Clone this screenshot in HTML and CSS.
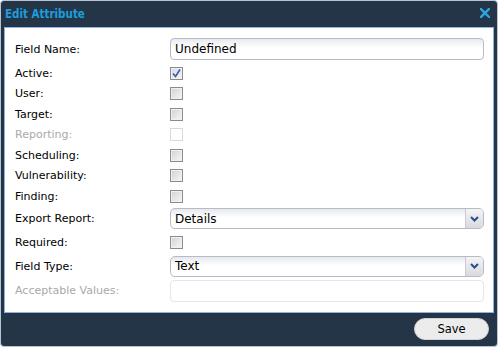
FILE: index.html
```html
<!DOCTYPE html>
<html lang="en">

<head>
    <meta charset="UTF-8">
    <title>Edit Attribute</title>
    <link rel="stylesheet" href="styles.css">
</head>

<body>

    <div class="dialog">
        <div class="titlebar">
            <span class="title">Edit Attribute</span>
            <svg class="close" width="10" height="10" viewBox="0 0 10 10">
                <path d="M1 1 L9 9 M9 1 L1 9" stroke="#2ea6de" stroke-width="2.4" stroke-linecap="square" />
            </svg>
        </div>

        <div class="panel">
            <div class="form">
                <label class="lbl">Field Name:</label>
                <div class="cell"><input class="text-input" type="text" value="Undefined"></div>

                <label class="lbl">Active:</label>
                <div class="cell small"><span class="check checked">
                    <svg width="11" height="11" viewBox="0 0 11 11"><path d="M2 5.5 L4.5 8.5 L9 1.5" fill="none" stroke="#3b5ba8" stroke-width="1.6" /></svg>
                </span></div>

                <label class="lbl">User:</label>
                <div class="cell small"><span class="check"></span></div>

                <label class="lbl">Target:</label>
                <div class="cell small"><span class="check"></span></div>

                <label class="lbl disabled">Reporting:</label>
                <div class="cell small"><span class="check off"></span></div>

                <label class="lbl">Scheduling:</label>
                <div class="cell small"><span class="check"></span></div>

                <label class="lbl">Vulnerability:</label>
                <div class="cell small"><span class="check"></span></div>

                <label class="lbl">Finding:</label>
                <div class="cell small"><span class="check"></span></div>

                <label class="lbl">Export Report:</label>
                <div class="cell"><div class="combo"><span class="combo-text">Details</span><span class="combo-btn">
                    <svg width="9" height="6" viewBox="0 0 9 6"><path d="M1 1 L4.5 4.5 L8 1" fill="none" stroke="#2c4a94" stroke-width="2" /></svg>
                </span></div></div>

                <label class="lbl">Required:</label>
                <div class="cell"><span class="check"></span></div>

                <label class="lbl">Field Type:</label>
                <div class="cell"><div class="combo"><span class="combo-text">Text</span><span class="combo-btn">
                    <svg width="9" height="6" viewBox="0 0 9 6"><path d="M1 1 L4.5 4.5 L8 1" fill="none" stroke="#2c4a94" stroke-width="2" /></svg>
                </span></div></div>

                <label class="lbl disabled">Acceptable Values:</label>
                <div class="cell"><input class="text-input off" type="text" disabled></div>
            </div>
        </div>

        <div class="footer">
            <button class="save">Save</button>
        </div>
    </div>

</body>

</html>
```

FILE: styles.css
```css
body {
    margin: 0;
    background: #ffffff;
    font-family: "DejaVu Sans", Verdana, sans-serif;
    font-size: 11px;
    color: #000000;
}

.dialog {
    box-sizing: border-box;
    width: 498px;
    height: 347px;
    border: 1px solid #b9c4d2;
    border-radius: 4px;
    background: #243548;
    padding: 0 3px;
    display: flex;
    flex-direction: column;
}

.titlebar {
    height: 26px;
    display: flex;
    align-items: center;
    justify-content: space-between;
    padding: 0 4px 0 1px;
}

.title {
    color: #1c9ddc;
    font-family: "DejaVu Sans Condensed", "DejaVu Sans", sans-serif;
    font-weight: bold;
    font-size: 11.5px;
    margin-top: -1px;
}

.close {
    margin-top: -3px;
}

.panel {
    box-sizing: border-box;
    height: 286px;
    background: #ffffff;
    border: 1px solid #8fb2e3;
    padding: 7px 9px 0 10px;
}

.form {
    display: grid;
    grid-template-columns: 155px 314px;
    grid-template-rows: 28px repeat(7, 20.5px) 24px 24px 23px 26px;
    align-items: center;
}

.lbl {
    white-space: nowrap;
}

.lbl.disabled {
    color: #a9a9a9;
}

.cell {
    display: flex;
    align-items: center;
}

.text-input {
    box-sizing: border-box;
    width: 314px;
    height: 22px;
    border: 1px solid #b7bac9;
    border-radius: 4px;
    background: linear-gradient(#e8eaee, #ffffff 45%);
    padding: 0 4px;
    font-family: inherit;
    font-size: 12px;
    color: #000000;
    outline: none;
}

.text-input.off {
    border-color: #e4e6ea;
    background: #ffffff;
}

.check {
    box-sizing: border-box;
    width: 13px;
    height: 13px;
    border: 1px solid #8c8c8c;
    background: linear-gradient(135deg, #cfd1d6, #f7f7f9);
    box-shadow: inset 0 0 0 1px #f0f0f0;
    display: flex;
    align-items: center;
    justify-content: center;
}

.check.checked {
    background: linear-gradient(135deg, #d6d9e2, #f5f6f8);
}

.check.off {
    border-color: #d9d9d9;
    background: #ffffff;
    box-shadow: none;
}

.combo {
    box-sizing: border-box;
    width: 314px;
    height: 21px;
    border: 1px solid #b7bac9;
    border-radius: 5px;
    background: linear-gradient(#e6e8ec, #ffffff 45%);
    display: flex;
    align-items: center;
    overflow: hidden;
}

.combo-text {
    flex: 1;
    padding-left: 4px;
    font-size: 12px;
}

.combo-btn {
    width: 17px;
    height: 100%;
    border-left: 1px solid #c9ccd4;
    background: linear-gradient(#f4f4f4, #d9dade);
    display: flex;
    align-items: center;
    justify-content: center;
}

.footer {
    flex: 1;
    display: flex;
    justify-content: flex-end;
    align-items: center;
    padding-right: 5px;
}

.save {
    width: 75px;
    height: 22px;
    border: 1px solid #d2d2d2;
    border-radius: 11px;
    background: #ececec;
    font-family: inherit;
    font-size: 11.5px;
    color: #000000;
    margin-top: -1px;
}
```
